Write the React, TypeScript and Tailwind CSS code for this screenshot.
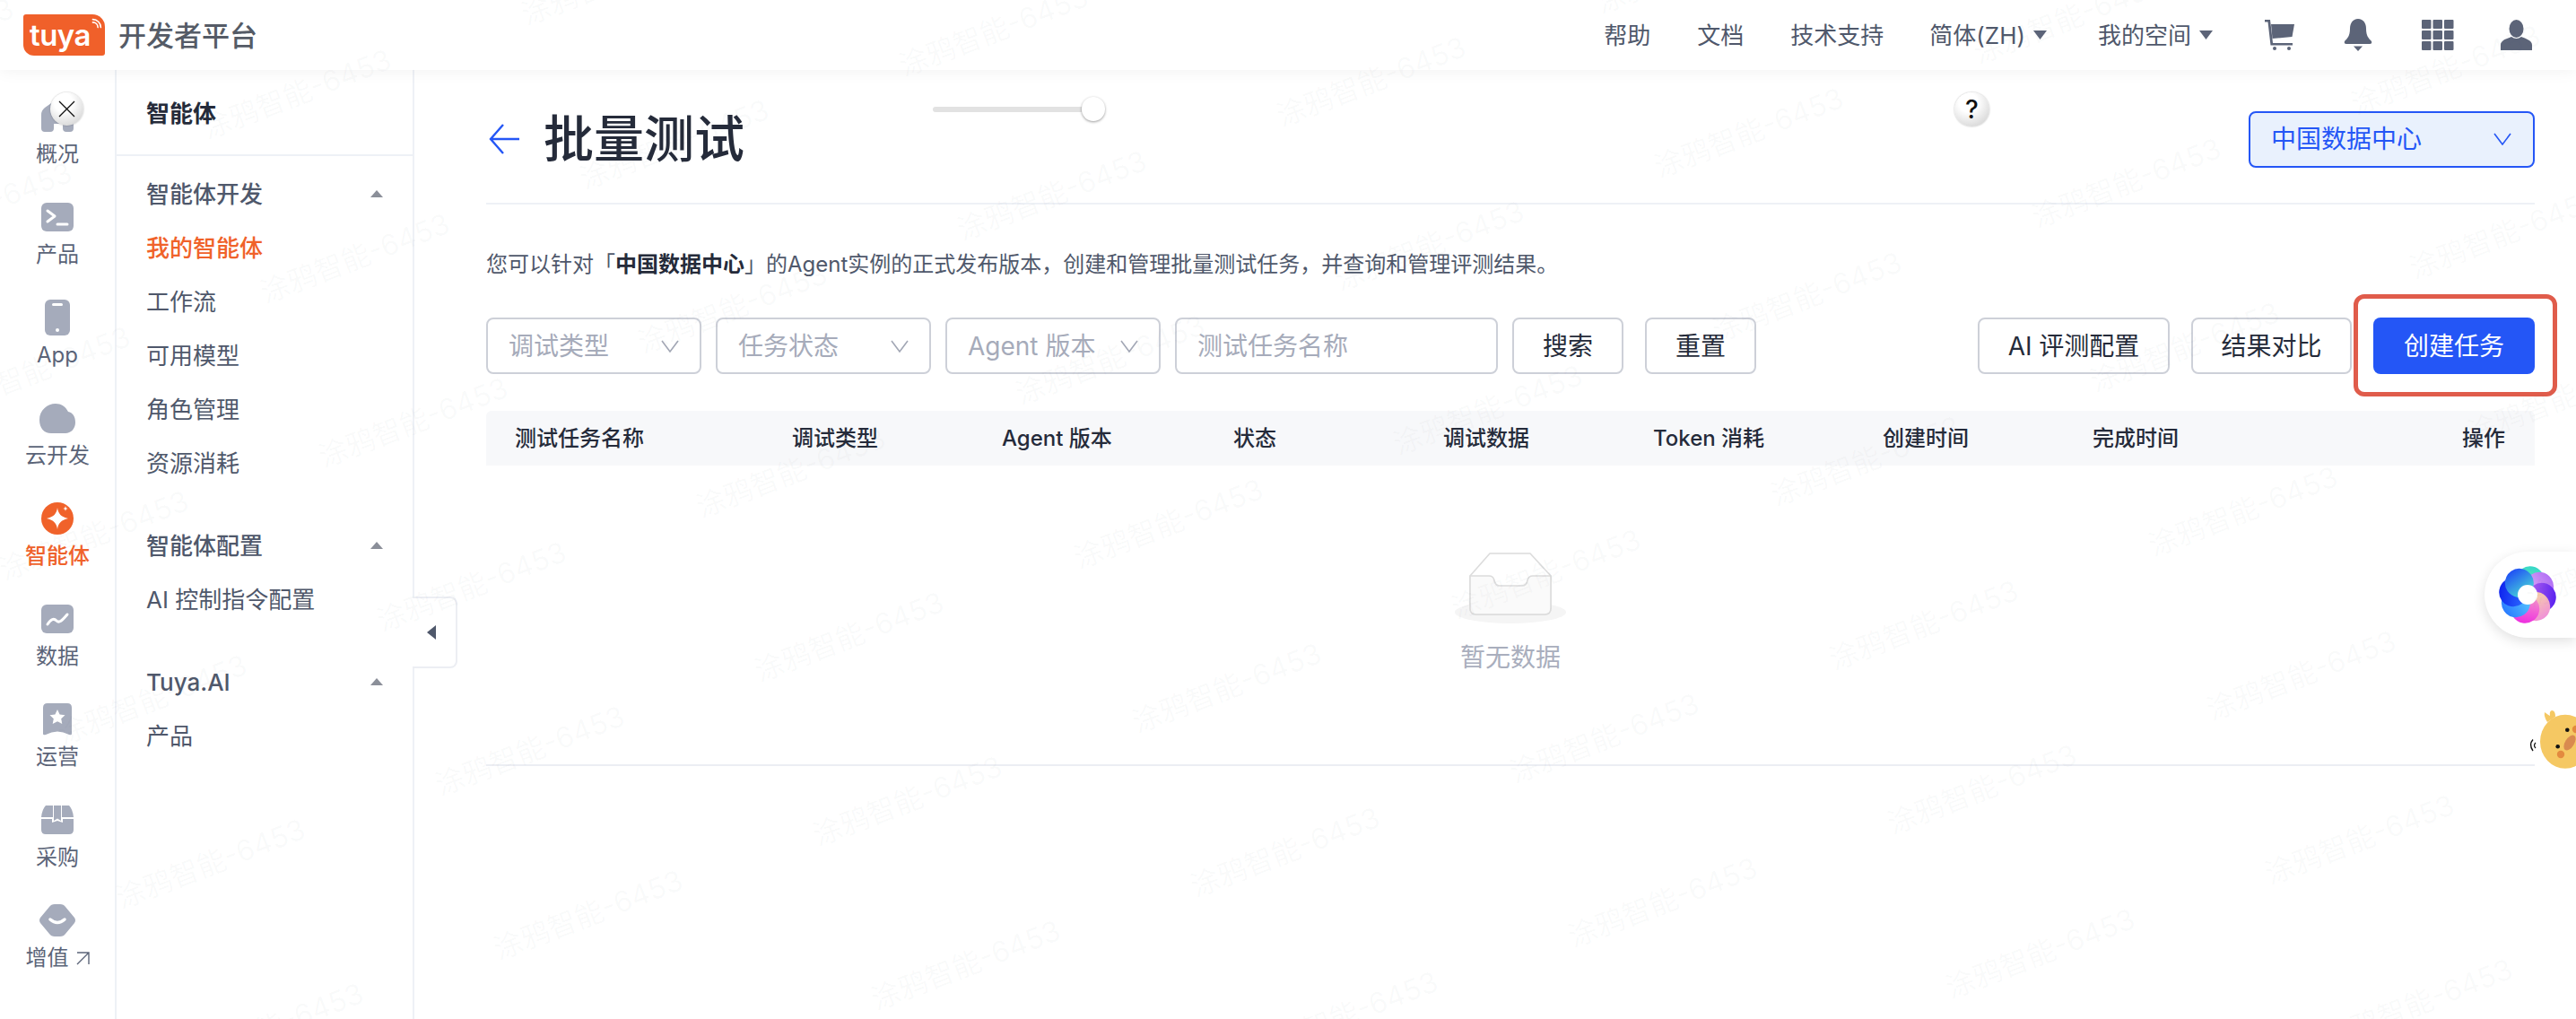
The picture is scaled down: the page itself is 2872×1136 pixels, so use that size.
import React from "react";

const Gray = "#a5abbb";

function RailIcon({ name }: { name: string }) {
  switch (name) {
    case "overview":
      return (
        <svg width="36" height="38" viewBox="0 0 36 38" fill={Gray}>
          <path d="M0 17 Q0 12 4 9 L14 2 Q18 0 22 2 L32 9 Q36 12 36 17 L36 32 Q36 36 32 36 L28 36 Q24 36 24 32 L24 27 L14 27 L14 32 Q14 36 10 36 L4 36 Q0 36 0 32 Z" />
        </svg>
      );
    case "product":
      return (
        <svg width="36" height="32" viewBox="0 0 36 32">
          <rect width="36" height="32" rx="6" fill={Gray} />
          <path d="M7 9 L15 15 L7 21" fill="none" stroke="#fff" strokeWidth="3" strokeLinecap="round" strokeLinejoin="round" />
          <path d="M18 24 H29" stroke="#fff" strokeWidth="3" strokeLinecap="round" />
        </svg>
      );
    case "app":
      return (
        <svg width="28" height="40" viewBox="0 0 28 40">
          <rect width="28" height="40" rx="6" fill={Gray} />
          <rect x="8" y="4" width="12" height="3" rx="1.5" fill="#fff" />
          <circle cx="14" cy="34" r="2" fill="#fff" />
        </svg>
      );
    case "cloud":
      return (
        <svg width="40" height="33" viewBox="0 0 40 33" fill={Gray}>
          <path d="M0 18 C0 7 9 0 18 0 C24 0 29 3 32 9 C37 10 40 14 40 21 C40 28 35 33 29 33 L13 33 C5 33 0 27 0 18 Z" />
        </svg>
      );
    case "agent":
      return (
        <svg width="36" height="36" viewBox="0 0 36 36">
          <circle cx="18" cy="18" r="18" fill="#f0622a" />
          <path d="M18 6 C19 13 22 16 30 18 C22 20 19 23 18 30 C17 23 14 20 6 18 C14 16 17 13 18 6 Z" fill="#fff" />
          <path d="M27 4 C27.3 6 28 6.7 30 7 C28 7.3 27.3 8 27 10 C26.7 8 26 7.3 24 7 C26 6.7 26.7 6 27 4 Z" fill="#fff" />
        </svg>
      );
    case "data":
      return (
        <svg width="36" height="32" viewBox="0 0 36 32">
          <rect width="36" height="32" rx="6" fill={Gray} />
          <path d="M7 22 C11 16 14 15 17 18 C20 21 23 18 29 11" fill="none" stroke="#fff" strokeWidth="3" strokeLinecap="round" />
        </svg>
      );
    case "ops":
      return (
        <svg width="32" height="36" viewBox="0 0 32 36">
          <path d="M0 5 Q0 0 5 0 L27 0 Q32 0 32 5 L32 34 Q32 36 29 35 Q16 28 3 35 Q0 36 0 34 Z" fill={Gray} />
          <path d="M16 7 L18.6 12.4 L24.5 13.2 L20.2 17.2 L21.3 23 L16 20.2 L10.7 23 L11.8 17.2 L7.5 13.2 L13.4 12.4 Z" fill="#fff" />
        </svg>
      );
    case "buy":
      return (
        <svg width="36" height="32" viewBox="0 0 36 32">
          <path d="M5 0 L13 0 L13 13 L0 13 Q1 4 5 0 Z" fill={Gray} />
          <path d="M23 0 L31 0 Q35 4 36 13 L23 13 Z" fill={Gray} />
          <path d="M14 0 L22 0 L22 17 L18 14.5 L14 17 Z" fill={Gray} />
          <path d="M0 15 L12 15 L12 19 L18 17 L24 19 L24 15 L36 15 L36 27 Q36 32 31 32 L5 32 Q0 32 0 27 Z" fill={Gray} />
        </svg>
      );
    default:
      return (
        <svg width="40" height="36" viewBox="0 0 40 36">
          <path d="M1 15 L11 3 Q13 0 17 0 L23 0 Q27 0 29 3 L39 15 Q41 18 39 21 L29 33 Q27 36 23 36 L17 36 Q13 36 11 33 L1 21 Q-1 18 1 15 Z" fill={Gray} />
          <path d="M12 17 Q20 24 28 17" fill="none" stroke="#fff" strokeWidth="3.5" strokeLinecap="round" />
        </svg>
      );
  }
}

const railItems = [
  { icon: "overview", label: "概况" },
  { icon: "product", label: "产品" },
  { icon: "app", label: "App" },
  { icon: "cloud", label: "云开发" },
  { icon: "agent", label: "智能体", active: true },
  { icon: "data", label: "数据" },
  { icon: "ops", label: "运营" },
  { icon: "buy", label: "采购" },
  { icon: "more", label: "增值", external: true },
];

function Caret() {
  return (
    <svg width="14" height="8" viewBox="0 0 14 8" fill="#8b8f99">
      <path d="M7 0 L14 8 L0 8 Z" />
    </svg>
  );
}

function Chevron({ color = "#a2a7b5" }: { color?: string }) {
  return (
    <svg width="20" height="14" viewBox="0 0 20 14" fill="none" stroke={color} strokeWidth="1.6">
      <path d="M1 1 L10 13 L19 1" />
    </svg>
  );
}

function NavGroup({ title, items }: { title: string; items: { label: string; active?: boolean }[] }) {
  return (
    <div className="mb-[32px]">
      <div className="flex h-[60px] items-center justify-between pl-[33px] pr-[33px] text-[26px] font-medium text-[#4f586b]">
        <span>{title}</span>
        <Caret />
      </div>
      {items.map((item) => (
        <div
          key={item.label}
          className={
            item.active
              ? "flex h-[60px] items-center pl-[33px] text-[26px] font-medium text-[#f0622a]"
              : "flex h-[60px] items-center pl-[33px] text-[26px] text-[#4f586b]"
          }
        >
          {item.label}
        </div>
      ))}
    </div>
  );
}

function Select({ label }: { label: string }) {
  return (
    <div className="flex h-[63px] w-[240px] items-center justify-between rounded-[8px] border-2 border-[#cdd0d8] pl-[23px] pr-[23px] text-[28px] text-[#a6abba]">
      <span className="whitespace-nowrap">{label}</span>
      <Chevron />
    </div>
  );
}

function OutlineButton({ label, className }: { label: string; className: string }) {
  return (
    <button className={"flex h-[63px] items-center justify-center rounded-[8px] border-2 border-[#cdd0d8] bg-white text-[28px] text-[#252b3a] " + className}>
      {label}
    </button>
  );
}

function BallWheel() {
  const petals = [
    ["#36d8c8", "#7df0b0"],
    ["#b070f5", "#e6b0f5"],
    ["#5a22f0", "#b060f0"],
    ["#f090d8", "#f8dca0"],
    ["#ee2fe0", "#f59ac8"],
    ["#2a7cff", "#58c8ff"],
    ["#0f24ee", "#2c6cff"],
    ["#2050f5", "#48d8d8"],
  ];
  return (
    <svg width="64" height="64" viewBox="0 0 64 64">
      <defs>
        {petals.map((p, i) => (
          <linearGradient key={i} id={"petal" + i} x1="0" y1="0" x2="0" y2="1">
            <stop offset="0" stopColor={p[0]} />
            <stop offset="1" stopColor={p[1]} />
          </linearGradient>
        ))}
      </defs>
      {petals.map((_, i) => (
        <circle key={i} cx="32" cy="16" r="16" transform={`rotate(${45 * i + 10} 32 32)`} fill={`url(#petal${i})`} />
      ))}
      <circle cx="32" cy="32" r="11" fill="#fff" />
    </svg>
  );
}

function Watermarks() {
  const marks: { x: number; y: number }[] = [];
  for (let n = -7; n <= 9; n++) {
    for (let m = -7; m <= 7; m++) {
      const x = 1012 + 421 * n + 65 * m;
      const y = 893 + 56.5 * n + 183 * m;
      if (x > -120 && x < 3000 && y > -60 && y < 1200) marks.push({ x, y });
    }
  }
  return (
    <div className="pointer-events-none absolute inset-0 z-40 overflow-hidden">
      {marks.map((p) => (
        <span
          key={p.x + "-" + p.y}
          className="absolute -translate-x-1/2 -translate-y-1/2 rotate-[-21deg] whitespace-nowrap text-[32px] leading-none text-[#5a6078]/[0.035]"
          style={{ left: p.x, top: p.y }}
        >
          涂鸦智能-6453
        </span>
      ))}
    </div>
  );
}

export default function App() {
  return (
    <div className="relative flex h-[1136px] w-full flex-col overflow-hidden bg-white font-['Inter','Noto_Sans_CJK_SC',sans-serif]">
      {/* Top bar */}
      <header className="relative z-10 flex h-[78px] shrink-0 items-center justify-between bg-white pl-[26px] pr-[49px] shadow-[0_2px_16px_rgba(0,0,0,0.05)]">
        <div className="flex items-center">
          <div className="relative flex h-[46px] w-[91px] items-center rounded-bl-[12px] rounded-br-[3px] rounded-tl-[3px] rounded-tr-[14px] bg-[#f0602a] pl-[7px]">
            <span className="text-[33px] font-semibold leading-none tracking-[-0.5px] text-white">tuya</span>
            <svg className="absolute right-[3px] top-[4px]" width="13" height="13" viewBox="0 0 16 16" fill="none" stroke="#fff" strokeWidth="2" strokeLinecap="round">
              <path d="M3 2 C9 2 14 7 14 13" />
              <path d="M3 6 C7 6 10 9 10 13" />
            </svg>
          </div>
          <span className="ml-[15px] text-[31px] font-medium leading-none text-[#555b66]">开发者平台</span>
        </div>
        <div className="flex items-center text-[26px] text-[#4f586b]">
          <span className="mr-[52px]">帮助</span>
          <span className="mr-[52px]">文档</span>
          <span className="mr-[51px]">技术支持</span>
          <span>简体(ZH)</span>
          <svg className="ml-[9px] mr-[57px]" width="15" height="10" viewBox="0 0 15 10" fill="#5c6478"><path d="M0 0 H15 L7.5 10 Z" /></svg>
          <span>我的空间</span>
          <svg className="ml-[9px] mr-[58px]" width="15" height="10" viewBox="0 0 15 10" fill="#5c6478"><path d="M0 0 H15 L7.5 10 Z" /></svg>
          <svg className="mr-[55px]" width="33" height="34" viewBox="0 0 33 34" fill="#5c6478">
            <path d="M0 0 H6 L9 26 H31 V28.5 H6.5 L3.5 2.5 H0 Z" />
            <path d="M7 5 H33 L30.5 19 L8.5 21 Z" />
            <circle cx="11" cy="32" r="2" />
            <circle cx="27" cy="32" r="2" />
          </svg>
          <svg className="mr-[55px]" width="32" height="36" viewBox="0 0 32 36" fill="#5c6478">
            <path d="M16 0 C22 0 25 5 25 11 C25 19 28 22 31 25 Q32 28 29 28 H3 Q0 28 1 25 C4 22 7 19 7 11 C7 5 10 0 16 0 Z" />
            <path d="M11 30.5 H21 L16 36 Z" />
          </svg>
          <svg className="mr-[52px]" width="36" height="34" viewBox="0 0 36 34" fill="#5c6478">
            {[0, 12.5, 25].map((x) =>
              [0, 12, 24].map((y) => <rect key={x + "-" + y} x={x} y={y} width="10.5" height="10" rx="1" />)
            )}
          </svg>
          <svg width="35" height="34" viewBox="0 0 35 34" fill="#5c6478">
            <ellipse cx="17.5" cy="10" rx="8" ry="10" />
            <path d="M0 34 L0 28 C0 23 7 21 12 19 Q17.5 23 23 19 C28 21 35 23 35 28 L35 34 Z" />
          </svg>
        </div>
      </header>

      <div className="flex min-h-0 flex-1">
        {/* Icon rail */}
        <nav className="w-[130px] shrink-0 border-r-2 border-[#eef1f6] pt-[24px]">
          {railItems.map((item) => (
            <div key={item.label} className="flex h-[112px] flex-col items-center">
              <div className="flex h-[56px] items-center justify-center">
                <RailIcon name={item.icon} />
              </div>
              <div className={"mt-[2px] flex h-[24px] items-center text-[24px] leading-none " + (item.active ? "font-medium text-[#f0622a]" : "text-[#5b6478]")}>
                {item.label}
                {item.external && (
                  <svg className="ml-[8px]" width="15" height="15" viewBox="0 0 15 15" fill="none" stroke="#5b6478" strokeWidth="1.4">
                    <path d="M1 1 H14 V14 M14 1 L1 14" />
                  </svg>
                )}
              </div>
            </div>
          ))}
        </nav>

        {/* Secondary nav */}
        <aside className="w-[332px] shrink-0 border-r-2 border-[#eef1f6]">
          <div className="flex h-[96px] items-center border-b-2 border-[#eef1f6] pl-[33px] pt-[2px] text-[26px] font-semibold text-[#252b3a]">
            智能体
          </div>
          <div className="pt-[12px]">
            <NavGroup
              title="智能体开发"
              items={[
                { label: "我的智能体", active: true },
                { label: "工作流" },
                { label: "可用模型" },
                { label: "角色管理" },
                { label: "资源消耗" },
              ]}
            />
            <NavGroup title="智能体配置" items={[{ label: "AI 控制指令配置" }]} />
            <NavGroup title="Tuya.AI" items={[{ label: "产品" }]} />
          </div>
        </aside>

        {/* Main content */}
        <main className="min-w-0 flex-1 pl-[80px] pr-[46px]">
          <div className="flex h-[150px] items-center justify-between border-b-2 border-[#eef1f6] pt-[6px]">
            <div className="flex items-center">
              <svg className="ml-[3px]" width="34" height="34" viewBox="0 0 34 34" fill="none" stroke="#2456f6" strokeWidth="2.4">
                <path d="M16 1 L2 17 L16 33 M2 17 H34" />
              </svg>
              <h1 className="ml-[27px] text-[56px] font-medium leading-none text-[#252b3a]">批量测试</h1>
            </div>
            <div className="flex h-[63px] w-[319px] items-center justify-between rounded-[8px] border-2 border-[#2456f6] bg-[#e9f1fd] pl-[23px] pr-[24px] text-[28px] text-[#2456f6]">
              <span>中国数据中心</span>
              <Chevron color="#2456f6" />
            </div>
          </div>

          <p className="mt-[49px] h-[36px] text-[24px] leading-[36px] text-[#4f586b]">
            您可以针对「<span className="font-semibold text-[#252b3a]">中国数据中心</span>」的Agent实例的正式发布版本，创建和管理批量测试任务，并查询和管理评测结果。
          </p>

          <div className="mt-[41px] flex items-center justify-between">
            <div className="flex items-center">
              <div className="flex gap-[16px]">
                <Select label="调试类型" />
                <Select label="任务状态" />
                <Select label="Agent 版本" />
                <div className="flex h-[63px] w-[360px] items-center rounded-[8px] border-2 border-[#cdd0d8] pl-[23px] text-[28px] text-[#a6abba]">
                  测试任务名称
                </div>
              </div>
              <OutlineButton label="搜索" className="ml-[16px] w-[124px]" />
              <OutlineButton label="重置" className="ml-[24px] w-[124px]" />
            </div>
            <div className="flex items-center">
              <OutlineButton label="AI 评测配置" className="w-[214px]" />
              <OutlineButton label="结果对比" className="ml-[24px] w-[179px]" />
              <div className="relative ml-[24px]">
                <button className="flex h-[63px] w-[180px] items-center justify-center rounded-[8px] bg-[#2456f6] text-[28px] text-white">
                  创建任务
                </button>
                <div className="pointer-events-none absolute bottom-[-25px] left-[-22px] right-[-25px] top-[-26px] rounded-[12px] border-[5px] border-[#e05c4b]" />
              </div>
            </div>
          </div>

          {/* Table */}
          <div className="mt-[41px] border-b-2 border-[#eceef3]">
            <div className="grid h-[61px] grid-cols-[309px_234px_258px_234px_234px_256px_234px_1fr] items-center rounded-t-[6px] bg-[#f7f8fa] pl-[32px] pr-[33px] text-[24px] font-medium text-[#252b3a]">
              <span>测试任务名称</span>
              <span>调试类型</span>
              <span>Agent 版本</span>
              <span>状态</span>
              <span>调试数据</span>
              <span>Token 消耗</span>
              <span>创建时间</span>
              <div className="flex justify-between">
                <span>完成时间</span>
                <span>操作</span>
              </div>
            </div>
            <div className="flex h-[333px] flex-col items-center pt-[97px]">
              <svg width="124" height="79" viewBox="0 0 124 79">
                <ellipse cx="62" cy="66.5" rx="62" ry="12.5" fill="#f5f5f5" />
                <path d="M17 26 L39 1 H84 L107 26 V62 Q107 69 100 69 H24 Q17 69 17 62 Z" fill="#fff" stroke="#dcdcdc" strokeWidth="1.6" strokeLinejoin="round" />
                <path d="M17 26 H38 Q43 26 44 31 Q45 37 50 37 H75 Q80 37 81 31 Q82 26 87 26 H107 V62 Q107 69 100 69 H24 Q17 69 17 62 Z" fill="#fafafa" stroke="#dcdcdc" strokeWidth="1.6" strokeLinejoin="round" />
              </svg>
              <div className="mt-[20px] h-[36px] text-[28px] leading-[36px] text-[#a9aebd]">暂无数据</div>
            </div>
          </div>
        </main>
      </div>

      {/* Floating overlays */}
      <button className="absolute left-[460px] top-[665px] flex h-[80px] w-[50px] items-center justify-center rounded-r-[8px] border-2 border-l-0 border-[#eceef3] bg-white">
        <svg className="mr-[6px]" width="10" height="16" viewBox="0 0 10 16" fill="#4f586b"><path d="M10 0 V16 L0 8 Z" /></svg>
      </button>

      <div className="absolute left-[1040px] top-[108px] flex h-[27px] w-[192px] items-center">
        <div className="h-[6px] flex-1 rounded-l-full bg-[#e2e2e2]" />
        <div className="h-[27px] w-[26px] rounded-full bg-white shadow-[0_1px_3px_rgba(0,0,0,0.4)]" />
      </div>

      <div className="absolute left-[56px] top-[103px] z-20 flex h-[37px] w-[37px] items-center justify-center rounded-full bg-[radial-gradient(circle_at_40%_30%,#ffffff_30%,#c9c9c9_100%)] shadow-[0_0_2px_rgba(0,0,0,0.3)]">
        <svg width="19" height="19" viewBox="0 0 19 19" fill="none" stroke="#111" strokeWidth="1.3"><path d="M1 1 L18 18 M18 1 L1 18" /></svg>
      </div>

      <div className="absolute left-[2179px] top-[103px] z-20 flex h-[38px] w-[39px] items-center justify-center rounded-full bg-[radial-gradient(circle_at_40%_30%,#ffffff_30%,#c9c9c9_100%)] text-[28px] font-medium leading-none text-[#111] shadow-[0_0_2px_rgba(0,0,0,0.3)]">
        ?
      </div>

      <div className="absolute left-[2770px] right-0 top-[615px] flex h-[96px] items-center rounded-l-[48px] bg-white pl-[16px] shadow-[0_4px_14px_rgba(0,0,0,0.12)]">
        <BallWheel />
      </div>

      <svg className="absolute left-[2816px] top-[785px]" width="56" height="75" viewBox="0 0 56 75">
        <path d="M21 9 Q25 12 27 13 Q26 8 29 7 Q33 7 33 14 L24 20 Q20 14 21 9 Z" fill="#f5c863" />
        <ellipse cx="44" cy="41.7" rx="28" ry="30" fill="#f5c863" />
        <circle cx="46.3" cy="28.7" r="2.3" fill="#111" />
        <circle cx="35.7" cy="47.3" r="2.3" fill="#111" />
        <circle cx="39" cy="56" r="4.2" fill="#e38a3f" />
        <circle cx="56" cy="28" r="4.2" fill="#e38a3f" />
        <ellipse cx="49" cy="43" rx="5" ry="9.5" transform="rotate(32 49 43)" fill="#d98a4f" />
        <path d="M8 39.5 Q3 45 8 52" fill="none" stroke="#111" strokeWidth="1.4" />
        <path d="M11 43 Q8 46 11 49" fill="none" stroke="#111" strokeWidth="1.2" />
      </svg>

      <Watermarks />
    </div>
  );
}
